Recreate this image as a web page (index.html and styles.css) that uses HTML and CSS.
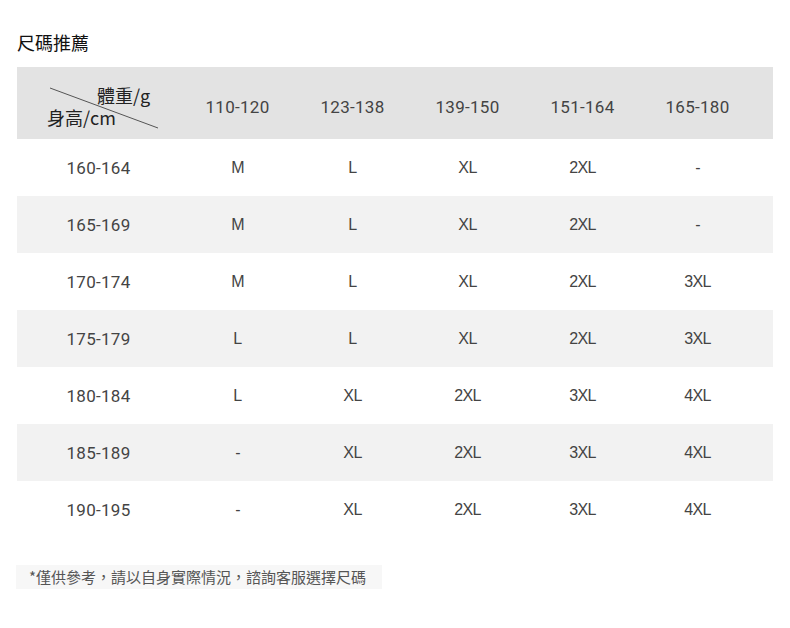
FILE: index.html
```html
<!DOCTYPE html>
<html lang="zh-Hant">
<head>
<meta charset="utf-8">
<title>尺碼推薦</title>
<link rel="stylesheet" href="styles.css">
</head>
<body>
<div class="page">
  <h1 class="title">尺碼推薦</h1>
  <div class="table">
    <div class="row head">
      <div class="cell corner">
        <svg class="diag" width="163" height="72" viewBox="0 0 163 72"><line x1="33" y1="21" x2="141" y2="61" stroke="#555" stroke-width="1"/></svg>
        <span class="c-top">體重/g</span>
        <span class="c-bot">身高/cm</span>
      </div>
      <div class="cell num">110-120</div>
      <div class="cell num">123-138</div>
      <div class="cell num">139-150</div>
      <div class="cell num">151-164</div>
      <div class="cell num">165-180</div>
      <div class="cell"></div>
    </div>
    <div class="row">
      <div class="cell num">160-164</div><div class="cell sz">M</div><div class="cell sz">L</div><div class="cell sz">XL</div><div class="cell sz">2XL</div><div class="cell sz">-</div><div class="cell"></div>
    </div>
    <div class="row alt">
      <div class="cell num">165-169</div><div class="cell sz">M</div><div class="cell sz">L</div><div class="cell sz">XL</div><div class="cell sz">2XL</div><div class="cell sz">-</div><div class="cell"></div>
    </div>
    <div class="row">
      <div class="cell num">170-174</div><div class="cell sz">M</div><div class="cell sz">L</div><div class="cell sz">XL</div><div class="cell sz">2XL</div><div class="cell sz">3XL</div><div class="cell"></div>
    </div>
    <div class="row alt">
      <div class="cell num">175-179</div><div class="cell sz">L</div><div class="cell sz">L</div><div class="cell sz">XL</div><div class="cell sz">2XL</div><div class="cell sz">3XL</div><div class="cell"></div>
    </div>
    <div class="row">
      <div class="cell num">180-184</div><div class="cell sz">L</div><div class="cell sz">XL</div><div class="cell sz">2XL</div><div class="cell sz">3XL</div><div class="cell sz">4XL</div><div class="cell"></div>
    </div>
    <div class="row alt">
      <div class="cell num">185-189</div><div class="cell sz">-</div><div class="cell sz">XL</div><div class="cell sz">2XL</div><div class="cell sz">3XL</div><div class="cell sz">4XL</div><div class="cell"></div>
    </div>
    <div class="row">
      <div class="cell num">190-195</div><div class="cell sz">-</div><div class="cell sz">XL</div><div class="cell sz">2XL</div><div class="cell sz">3XL</div><div class="cell sz">4XL</div><div class="cell"></div>
    </div>
  </div>
  <p class="note">*僅供參考，請以自身實際情況，諮詢客服選擇尺碼</p>
</div>
</body>
</html>
```
FILE: styles.css
```css
* { box-sizing: border-box; }
html, body { margin: 0; padding: 0; background: #fff; }
body {
  font-family: "Noto Sans CJK TC", "Noto Sans", sans-serif;
  color: #333;
}
.page {
  padding: 30px 17px 0 17px;
  width: 790px;
}
.title {
  margin: 0 0 12px 0;
  font-size: 18px;
  font-weight: 400;
  line-height: 25px;
  color: #111;
}
.table {
  width: 756px;
}
.row {
  display: grid;
  grid-template-columns: 163px repeat(5, 115px) 1fr;
  height: 57px;
}
.row.head {
  height: 72px;
  background: #e3e3e3;
}
.row.alt { background: #f2f2f2; }
.cell {
  display: flex;
  align-items: center;
  justify-content: center;
}
.num {
  font-family: Roboto, "Liberation Sans", sans-serif;
  font-size: 17px;
  color: #444;
  letter-spacing: 0.3px;
}
.head .num { padding-top: 7px; }
.sz {
  font-family: "Liberation Sans", Arial, sans-serif;
  font-size: 16px;
  color: #444;
  letter-spacing: -0.6px;
}
.corner {
  position: relative;
  display: block;
}
.diag {
  position: absolute;
  left: 0;
  top: 0;
}
.c-top {
  position: absolute;
  left: 80px;
  top: 16px;
  font-size: 18px;
  line-height: 24px;
  color: #222;
}
.c-bot {
  position: absolute;
  left: 30px;
  top: 38px;
  font-size: 18px;
  line-height: 24px;
  color: #222;
}
.note {
  display: inline-block;
  margin: 27px 0 0 -1px;
  padding: 1px 16px 2px 13px;
  background: #f7f7f7;
  font-size: 15px;
  line-height: 21px;
  color: #555;
}
```
